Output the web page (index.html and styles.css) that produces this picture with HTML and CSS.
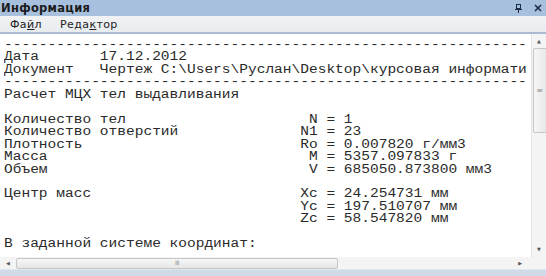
FILE: index.html
```html
<!DOCTYPE html>
<html lang="ru">
<head>
  <meta charset="UTF-8" />
  <title>Информация</title>
  <link rel="stylesheet" href="styles.css">
</head>
<body>
  <div class="window">
    <header class="titlebar">
      <h1>Информация</h1>
      <div class="title-buttons">
        <svg class="pin" width="7" height="9" viewBox="0 0 7 9">
          <rect x="1.5" y="0.5" width="4" height="4" fill="none" stroke="#1c2c44" />
          <line x1="0" y1="5.5" x2="7" y2="5.5" stroke="#1c2c44" />
          <line x1="3.5" y1="5.5" x2="3.5" y2="9" stroke="#1c2c44" />
        </svg>
        <svg class="close" width="8" height="8" viewBox="0 0 8 8">
          <path d="M1 1 L7 7 M7 1 L1 7" stroke="#1c2c44" stroke-width="1.6" />
        </svg>
      </div>
    </header>

    <nav class="menubar">
      <span>Фа<u>й</u>л</span>
      <span>Реда<u>к</u>тор</span>
    </nav>

    <div class="panel">
      <div class="doc">
<pre class="report">------------------------------------------------------------
Дата       17.12.2012
Документ   Чертеж C:\Users\Руслан\Desktop\курсовая информати
------------------------------------------------------------
Расчет МЦХ тел выдавливания

Количество тел                     N = 1
Количество отверстий              N1 = 23
Плотность                         Ro = 0.007820 г/мм3
Масса                              M = 5357.097833 г
Объем                              V = 685050.873800 мм3

Центр масс                        Xc = 24.254731 мм
                                  Yc = 197.510707 мм
                                  Zc = 58.547820 мм

В заданной системе координат:</pre>
      </div>

      <div class="vscroll">
        <span class="arrow">&#9650;</span>
        <div class="vthumb"><span class="grip">&#8801;</span></div>
        <span class="vspace"></span>
        <span class="arrow">&#9660;</span>
      </div>

      <div class="hscroll">
        <span class="arrow">&#9664;</span>
        <div class="hthumb"><span class="grip">III</span></div>
        <span class="hspace"></span>
        <span class="arrow">&#9654;</span>
      </div>

      <div class="corner"></div>
    </div>

    <div class="bottom-edge"></div>
  </div>
</body>
</html>
```

FILE: styles.css
```css
body {
  margin: 0;
  background: #ffffff;
  font-family: "DejaVu Sans", Verdana, sans-serif;
}

.window {
  width: 546px;
  height: 276px;
  display: flex;
  flex-direction: column;
  overflow: hidden;
}

/* Title */
.titlebar {
  height: 16px;
  flex-shrink: 0;
  background: #a7c0dd;
  display: flex;
  align-items: center;
  justify-content: space-between;
  padding: 0 4px 0 1px;
}

.titlebar h1 {
  margin: 0;
  font-size: 11.5px;
  font-weight: bold;
  color: #1b1b1b;
  letter-spacing: 0.3px;
}

.title-buttons {
  display: flex;
  align-items: center;
  gap: 12px;
}

/* Menu */
.menubar {
  height: 16px;
  flex-shrink: 0;
  background: linear-gradient(#f1f2f4, #e9ecef);
  border-bottom: 2px solid #a9bcd2;
  display: flex;
  align-items: center;
  gap: 18px;
  padding: 0 0 0 10px;
  font-size: 11px;
  letter-spacing: 0.4px;
  color: #222;
}

.menubar u {
  text-decoration-thickness: 1px;
}

/* Text + scrollbars */
.panel {
  flex: 1;
  display: grid;
  grid-template-columns: 1fr 15px;
  grid-template-rows: 1fr 12px;
  min-height: 0;
}

.doc {
  background: #fff;
  overflow: hidden;
  padding: 5px 0 0 4px;
}

.report {
  width: 434px;
  margin: 0;
  font-family: "Liberation Mono", "Courier New", monospace;
  font-size: 12px;
  line-height: 12.45px;
  color: #2a2a2a;
  transform: scaleX(1.21);
  transform-origin: 0 0;
  white-space: pre;
  overflow: hidden;
}

.arrow {
  display: block;
  font-size: 5px;
  line-height: 5px;
  color: #555;
}

.vscroll {
  background: #f4f4f4;
  border-left: 1px solid #e4e4e4;
  display: flex;
  flex-direction: column;
  align-items: center;
  padding: 5px 0 5px;
  gap: 4px;
}

.vthumb {
  width: 14px;
  height: 85px;
  margin-left: 1px;
  box-sizing: border-box;
  border: 1px solid #c6c6c6;
  border-radius: 2px;
  background: linear-gradient(90deg, #f6f6f6, #e8e8e8);
  display: flex;
  align-items: center;
  justify-content: center;
}

.grip {
  font-size: 8px;
  line-height: 8px;
  color: #8a8a8a;
}

.hthumb .grip {
  font-size: 6px;
  line-height: 6px;
  letter-spacing: -0.5px;
}

.vspace,
.hspace {
  flex: 1;
}

.hscroll {
  background: #f4f4f4;
  display: flex;
  align-items: center;
  padding: 0 9px 0 6px;
  gap: 6px;
}

.hthumb {
  width: 322px;
  height: 11px;
  box-sizing: border-box;
  border: 1px solid #c6c6c6;
  border-radius: 2px;
  background: linear-gradient(#f6f6f6, #e6e6e6);
  display: flex;
  align-items: center;
  justify-content: center;
}

.corner {
  background: #f4f4f4;
}

.bottom-edge {
  height: 6px;
  flex-shrink: 0;
  border-top: 1px solid #e0e6ee;
  background: #cfdbe8;
}
```
